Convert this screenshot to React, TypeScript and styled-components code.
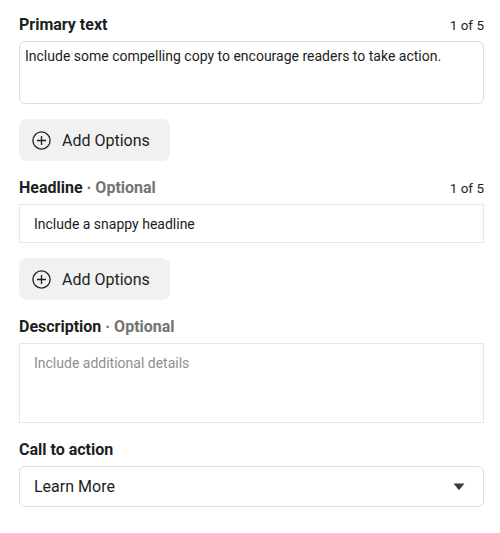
import React from 'react'
import styled, {createGlobalStyle} from 'styled-components'

const palette = {
  text: '#1c1e21',
  muted: '#737373',
  placeholder: '#8d8f94',
  border: '#dadde1',
  borderLight: '#e6e6e6',
  button: '#f1f1f1',
}

const GlobalStyle = createGlobalStyle`
  body {
    margin: 0;
    background: #ffffff;
    font-family: Roboto, "Liberation Sans", Arial, sans-serif;
    color: ${palette.text};
  }
`

const Page = styled.div`
  width: 465px;
  padding: 15px 16px 24px 19px;
  display: flex;
  flex-direction: column;
  gap: 17px;
`

const Section = styled.div`
  display: flex;
  flex-direction: column;
  gap: 6px;
`

const LabelRow = styled.div`
  display: flex;
  justify-content: space-between;
  align-items: flex-start;
`

const Label = styled.div`
  font-size: 16px;
  line-height: 20px;
  font-weight: 700;
  color: ${palette.text};
`

const Optional = styled.span`
  color: ${palette.muted};
`

const Counter = styled.div`
  padding-top: 2px;
  font-size: 13.5px;
  line-height: 16px;
  color: ${palette.text};
`

const TextBox = styled.div<{$rounded?: boolean; $height: number; $padLeft: number}>`
  box-sizing: border-box;
  height: ${(p) => p.$height}px;
  border: 1px solid ${(p) => (p.$rounded ? palette.border : palette.borderLight)};
  border-radius: ${(p) => (p.$rounded ? '6px' : '0')};
  padding: 5px 12px 0 ${(p) => p.$padLeft}px;
  font-size: 14px;
  line-height: 18px;
  color: ${palette.text};
`

const SingleLine = styled(TextBox)`
  display: flex;
  align-items: center;
  padding-top: 0;
`

const Placeholder = styled.span`
  display: block;
  padding-top: 5px;
  color: ${palette.placeholder};
`

const AddButton = styled.button`
  margin-top: 9px;
  align-self: flex-start;
  box-sizing: border-box;
  height: 42px;
  display: flex;
  align-items: center;
  gap: 11px;
  padding: 0 20px 0 13px;
  border: none;
  border-radius: 8px;
  background: ${palette.button};
  font-family: inherit;
  font-size: 16px;
  color: ${palette.text};
  cursor: pointer;
`

const Select = styled.div`
  box-sizing: border-box;
  height: 41px;
  display: flex;
  align-items: center;
  justify-content: space-between;
  padding: 0 18px 0 14px;
  border: 1px solid ${palette.border};
  border-radius: 6px;
  font-size: 16px;
  color: ${palette.text};
`

const PlusIcon = () => (
  <svg width='19' height='19' viewBox='0 0 19 19' fill='none'>
    <circle cx='9.5' cy='9.5' r='8.6' stroke={palette.text} strokeWidth='1.3' />
    <path d='M9.5 5v9M5 9.5h9' stroke={palette.text} strokeWidth='1.3' />
  </svg>
)

const Caret = () => (
  <svg width='12' height='7' viewBox='0 0 12 7'>
    <path d='M0.5 0.5h11L6.8 6.2a1 1 0 0 1-1.6 0z' fill='#3a3b3c' />
  </svg>
)

const App: React.FC = () => {
  return (
    <>
      <GlobalStyle />
      <Page>
        <Section>
          <LabelRow>
            <Label>Primary text</Label>
            <Counter>1 of 5</Counter>
          </LabelRow>
          <TextBox $rounded $height={63} $padLeft={5}>
            Include some compelling copy to encourage readers to take action.
          </TextBox>
          <AddButton type='button'>
            <PlusIcon />
            Add Options
          </AddButton>
        </Section>

        <Section>
          <LabelRow>
            <Label>
              Headline <Optional>· Optional</Optional>
            </Label>
            <Counter>1 of 5</Counter>
          </LabelRow>
          <SingleLine $height={39} $padLeft={14}>
            Include a snappy headline
          </SingleLine>
          <AddButton type='button'>
            <PlusIcon />
            Add Options
          </AddButton>
        </Section>

        <Section>
          <LabelRow>
            <Label>
              Description <Optional>· Optional</Optional>
            </Label>
          </LabelRow>
          <TextBox $height={80} $padLeft={14}>
            <Placeholder>Include additional details</Placeholder>
          </TextBox>
        </Section>

        <Section>
          <LabelRow>
            <Label>Call to action</Label>
          </LabelRow>
          <Select>
            Learn More
            <Caret />
          </Select>
        </Section>
      </Page>
    </>
  )
}

export default App
